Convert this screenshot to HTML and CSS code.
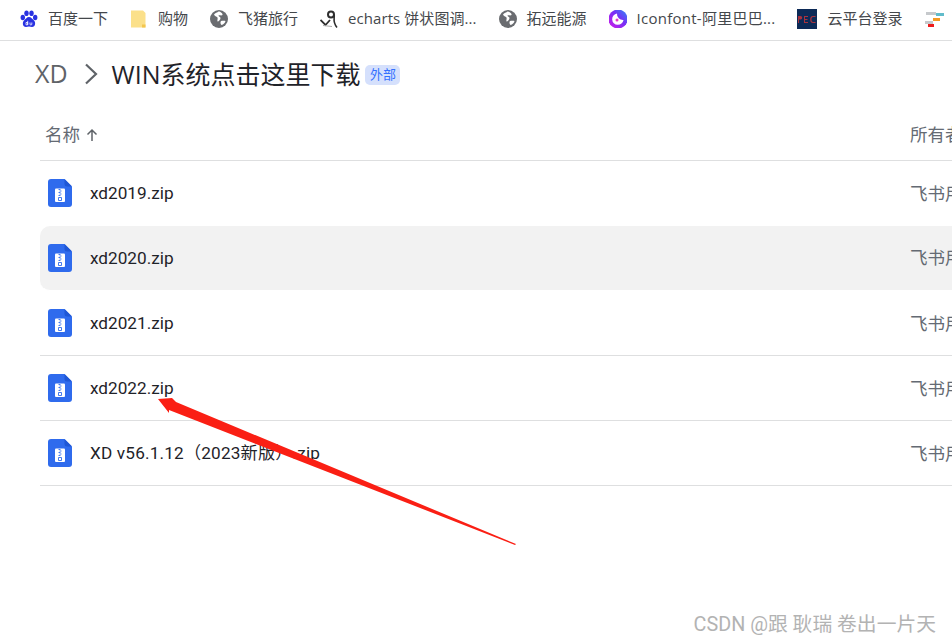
FILE: index.html
```html
<!DOCTYPE html>
<html lang="zh-CN">
<head>
<meta charset="utf-8">
<title>WIN系统点击这里下载</title>
<link rel="stylesheet" href="styles.css">
</head>
<body>
<nav class="bookmarks">
  <a class="bookmark">
    <svg class="bm-icon" viewBox="0 0 18 18"><g fill="#2932e1"><ellipse cx="2.800" cy="7.500" rx="2.200" ry="2.800"/><ellipse cx="6.500" cy="3.200" rx="2.200" ry="2.800"/><ellipse cx="11.500" cy="3.200" rx="2.200" ry="2.800"/><ellipse cx="15.200" cy="7.500" rx="2.200" ry="2.800"/><path d="M9 7c2.200 0 3.200 2 5 3.500 1.900 1.700 1.500 6.500-2 6.500-1.200 0-2-.4-3-.4s-1.800.4-3 .4c-3.500 0-3.900-4.800-2-6.500C5.800 9 6.800 7 9 7z"/></g><path d="M6 12.500h1.700v2.300H6zM7.700 10.800v4M10 12.500v1.600a.9.9 0 0 0 1.800 0v-1.600" fill="none" stroke="#fff" stroke-width=".8"/></svg>
    <span>百度一下</span>
  </a>
  <a class="bookmark">
    <svg class="bm-icon" viewBox="0 0 18 18"><path d="M1 0.500h12l2.500 2.500v14.500H1z" fill="#fbe08a"/><path d="M12 17.500v-3h3.500v3z" fill="#f3c64f"/></svg>
    <span>购物</span>
  </a>
  <a class="bookmark">
    <svg class="bm-icon" viewBox="0 0 18 18"><circle cx="9" cy="9" r="9" fill="#6a6c70"/><path d="M8.500 1.500c-1 1.500-3.500 1-4.500 3 .5 2 2.500 1.500 3.500 3 .5 1.500-.5 2.500 0 4 1.500 0 3-2 3-3.500 0-1.500-2-1-2-2.500 1-.5 3 .5 4-.5.500-1.500-2-3.500-4-3.500zM11 11c1.500-.5 3.500-.5 4.500 0-.5 2-2 3.500-4 4-1-1-1.500-2.500-.5-4z" fill="#fff"/></svg>
    <span>飞猪旅行</span>
  </a>
  <a class="bookmark">
    <svg class="bm-icon" viewBox="0 0 18 18" fill="none" stroke="#2e2e2e"><path d="M0.500 10l5 5 4.500-5" stroke-width="1.800"/><circle cx="11" cy="4.500" r="3" stroke-width="2"/><path d="M14.200 4.500c.5 4.500-2 7 2.800 13" stroke-width="1.600"/><path d="M3 15.500l9 1" stroke="#aaa" stroke-width="1"/></svg>
    <span class="spaced-a">echarts 饼状图调...</span>
  </a>
  <a class="bookmark">
    <svg class="bm-icon" viewBox="0 0 18 18"><circle cx="9" cy="9" r="9" fill="#6a6c70"/><path d="M8.500 1.500c-1 1.500-3.500 1-4.500 3 .5 2 2.500 1.500 3.500 3 .5 1.500-.5 2.500 0 4 1.500 0 3-2 3-3.500 0-1.500-2-1-2-2.500 1-.5 3 .5 4-.5.500-1.500-2-3.500-4-3.500zM11 11c1.500-.5 3.500-.5 4.500 0-.5 2-2 3.500-4 4-1-1-1.500-2.500-.5-4z" fill="#fff"/></svg>
    <span>拓远能源</span>
  </a>
  <a class="bookmark">
    <svg class="bm-icon" viewBox="0 0 18 18"><defs><linearGradient id="ifg" x1="0" y1="1" x2="1" y2="0"><stop offset="0" stop-color="#d41de8"/><stop offset=".55" stop-color="#7a2df5"/><stop offset="1" stop-color="#2b8cf7"/></linearGradient></defs><circle cx="9" cy="9" r="9.500" fill="url(#ifg)"/><path d="M8 3.500a5.700 5.700 0 1 0 6.500 6.500A6 6 0 0 1 8 3.500z" fill="#fff"/><circle cx="8" cy="10" r="1.500" fill="#e63bc8"/></svg>
    <span class="spaced-b">Iconfont-阿里巴巴...</span>
  </a>
  <a class="bookmark">
    <svg class="bm-icon large" viewBox="0 0 20 20"><rect width="20" height="20" fill="#0c2a57"/><path d="M1 7h2.500a1.500 1.500 0 0 1 0 3.500H2V14H1zM7 7h4v1H8v2h2.500v1H8v2h3v1H7zM18.500 8H16c-1 0-1.500 1-1.500 2.500S15 13 16 13h2.500v1H16c-2 0-2.800-1.500-2.800-3.500S14 7 16 7h2.500z" fill="#a8323f"/></svg>
    <span>云平台登录</span>
  </a>
  <a class="bookmark">
    <svg class="bm-icon large" viewBox="0 0 20 20"><rect x="1" y="3" width="10" height="3" fill="#c6c9cc"/><rect x="11" y="4" width="8" height="3" fill="#61bccb"/><rect x="8" y="9" width="7" height="3" fill="#f59a23"/><rect x="0" y="12" width="8" height="3" fill="#c6c9cc"/><rect x="3" y="15" width="6" height="3" fill="#ee1c1c"/></svg>
  </a>
</nav>

<main class="content">
  <header class="crumbs">
    <span class="crumb-parent">XD</span>
    <svg class="chevron" viewBox="0 0 14 22"><path d="M2 1.500l10 9.500-10 9.500" fill="none" stroke="#5f6368" stroke-width="2.200"/></svg>
    <h1 class="crumb-title">WIN系统点击这里下载</h1>
    <span class="tag">外部</span>
  </header>

  <section class="table">
    <div class="row head">
      <div class="col-name head-name">名称<svg class="sort" viewBox="0 0 12 14"><path d="M6 13V2M1.500 6.500L6 2l4.500 4.500" fill="none" stroke="#5f6368" stroke-width="1.500"/></svg></div>
      <div class="col-owner">所有者</div>
    </div>
    <div class="row file before-hover">
      <div class="col-name">
        <svg class="file-icon" viewBox="0 0 24 28"><use href="#zip"/></svg>
        <span>xd2019.zip</span>
      </div>
      <div class="col-owner">飞书用户</div>
    </div>
    <div class="row file hover">
      <div class="col-name">
        <svg class="file-icon" viewBox="0 0 24 28"><use href="#zip"/></svg>
        <span>xd2020.zip</span>
      </div>
      <div class="col-owner">飞书用户</div>
    </div>
    <div class="row file">
      <div class="col-name">
        <svg class="file-icon" viewBox="0 0 24 28"><use href="#zip"/></svg>
        <span>xd2021.zip</span>
      </div>
      <div class="col-owner">飞书用户</div>
    </div>
    <div class="row file">
      <div class="col-name">
        <svg class="file-icon" viewBox="0 0 24 28"><use href="#zip"/></svg>
        <span>xd2022.zip</span>
      </div>
      <div class="col-owner">飞书用户</div>
    </div>
    <div class="row file">
      <div class="col-name">
        <svg class="file-icon" viewBox="0 0 24 28"><use href="#zip"/></svg>
        <span class="mixed-name">XD v56.1.12（2023新版）.zip</span>
      </div>
      <div class="col-owner">飞书用户</div>
    </div>
  </section>
</main>

<svg class="defs" width="0" height="0">
  <symbol id="zip" viewBox="0 0 24 28">
    <path d="M3 0h13.500L24 7.500V25a3 3 0 0 1-3 3H3a3 3 0 0 1-3-3V3a3 3 0 0 1 3-3z" fill="#2f6bed"/>
    <path d="M16.500 0L24 7.500h-5a2.500 2.500 0 0 1-2.500-2.500z" fill="#1f57d6"/>
    <rect x="7" y="9.500" width="10" height="13.500" rx="1" fill="#fff"/>
    <path d="M10.500 10.500h2M11.500 12h2M10.500 13.500h2M11.500 15h2M10.500 16.500h2M10.500 18.500h3v3h-3z" fill="none" stroke="#2f6bed" stroke-width=".9"/>
  </symbol>
</svg>

<svg class="annotation" viewBox="0 0 952 643" width="952" height="643"><polygon points="158,399 172,398 176,402 516,544 515,545 169,410 169,413" fill="#fa1f14"/></svg>
<div class="watermark">CSDN @跟 耿瑞 卷出一片天</div>
</body>
</html>
```
FILE: styles.css
```css
html, body {
  margin: 0;
  padding: 0;
  width: 952px;
  height: 643px;
  overflow: hidden;
  background: #fff;
  font-family: "Roboto", "Noto Sans CJK SC", sans-serif;
  color: #1f2329;
}

.bookmarks {
  display: flex;
  align-items: center;
  gap: 22px;
  height: 37px;
  padding: 0 0 3px 20px;
  border-bottom: 1px solid #dedfe0;
  white-space: nowrap;
  font-family: "Open Sans", "Noto Sans CJK SC", sans-serif;
  font-size: 15px;
  color: #44474b;
}

.bookmark {
  display: flex;
  align-items: center;
  gap: 10px;
  flex: none;
}

.bookmark span {
  margin-bottom: 3px;
}

.spaced-a {
  letter-spacing: 0.07px;
}

.spaced-b {
  letter-spacing: 0.25px;
}

.bm-icon {
  width: 18px;
  height: 18px;
  flex: none;
}

.bm-icon.large {
  width: 20px;
  height: 20px;
}

.content {
  padding-left: 40px;
}

.crumbs {
  display: flex;
  align-items: center;
  height: 63px;
  padding-bottom: 6px;
  margin-left: -5px;
}

.crumb-parent {
  font-size: 25px;
  font-family: "Open Sans", "Noto Sans CJK SC", sans-serif;
  color: #5f6368;
}

.chevron {
  width: 14px;
  height: 22px;
  margin: 2px 14px 0 16px;
}

.crumb-title {
  margin: 0;
  font-family: "Open Sans", "Noto Sans CJK SC", sans-serif;
  font-size: 25px;
  font-weight: 400;
  color: #1f2329;
}

.tag {
  margin: 5px 0 0 5px;
  width: 35px;
  height: 20px;
  line-height: 19px;
  text-align: center;
  font-size: 13px;
  color: #3370ff;
  background: #d5e0fc;
  border-radius: 5px;
}

.table {
  width: 1100px;
}

.row {
  display: grid;
  grid-template-columns: 870px 1fr;
  align-items: center;
  height: 64px;
  border-bottom: 1px solid #dedfe0;
  font-size: 17.2px;
}

.row.head {
  height: 50px;
  font-size: 17.5px;
  color: #646a73;
}

.head-name {
  padding-left: 5px;
  padding-bottom: 3px;
}

.sort {
  width: 12px;
  height: 14px;
  margin: 2px 0 0 6px;
}

.row.head .col-owner {
  padding-bottom: 3px;
}

.row.before-hover {
  border-bottom-color: transparent;
}

.row.hover {
  height: 63px;
  padding-bottom: 1px;
  background: #f2f2f2;
  border-radius: 10px;
  border-bottom-color: #fff;
}

.col-name {
  display: flex;
  align-items: center;
}

.mixed-name {
  margin-bottom: 3px;
  letter-spacing: 0.17px;
}

.file-icon {
  width: 24px;
  height: 28px;
  margin: 0 18px 0 8px;
  flex: none;
}

.col-owner {
  font-size: 17.5px;
  padding-bottom: 2px;
  color: #646a73;
  white-space: nowrap;
}

.defs {
  position: absolute;
}

.annotation {
  position: absolute;
  left: 0;
  top: 0;
}

.watermark {
  position: absolute;
  right: 16px;
  bottom: 6px;
  font-size: 19.8px;
  color: #b3b3b3;
  white-space: nowrap;
}
```
